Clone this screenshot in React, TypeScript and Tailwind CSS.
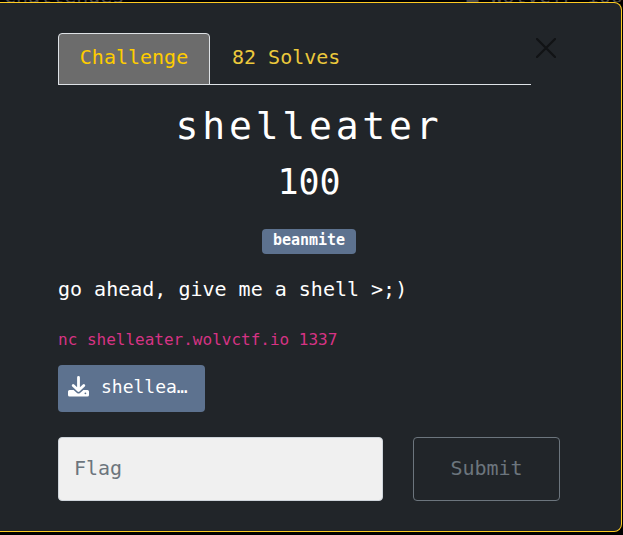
import React from "react";

function CloseIcon() {
  return (
    <svg viewBox="0 0 20 20" className="size-5" fill="none" stroke="#111315" strokeWidth="2.2" strokeLinecap="round" aria-hidden="true">
      <path d="M1 1 L19 19 M19 1 L1 19" />
    </svg>
  );
}

function DownloadIcon() {
  return (
    <svg viewBox="0 0 21 21" className="size-[21px] shrink-0" aria-hidden="true">
      <path
        d="M1.6 14 H5.6 L9 17 Q10.5 18.2 12 17 L15.4 14 H19.4 Q21 14 21 15.6 V19 Q21 20.6 19.4 20.6 H1.6 Q0 20.6 0 19 V15.6 Q0 14 1.6 14 Z"
        fill="currentColor"
      />
      <path
        d="M10.5 1.4 V14 M5.2 9.4 L10.5 14.6 L15.8 9.4"
        fill="none"
        stroke="currentColor"
        strokeWidth="2.8"
        strokeLinecap="round"
        strokeLinejoin="round"
      />
      <circle cx="17.4" cy="17.3" r="0.9" fill="#5d728f" />
    </svg>
  );
}

export default function App() {
  return (
    <div className="min-h-screen bg-black font-['DejaVu_Sans_Mono',monospace] text-white">
      <div className="flex h-[2px] items-end justify-between overflow-hidden pl-1 text-xl leading-3 text-[#4a4a4a]" aria-hidden="true">
        <span>Challenges</span>
        <span>■ WolvCTF 100</span>
      </div>
      <main className="mr-px rounded-r-lg border-y border-r border-[#fc2] bg-[#212529] pt-[30px] pr-[61px] pb-[30px] pl-[58px]">
        <div className="flex items-start">
          <div className="flex flex-1 border-b border-[#dee2e6]" role="tablist">
            <button
              type="button"
              role="tab"
              aria-selected="true"
              className="-mb-px h-[52px] w-[152px] rounded-t border border-[#dee2e6] bg-[#6c6c6c] pb-1 text-center text-xl text-[#fc0]"
            >
              Challenge
            </button>
            <button type="button" role="tab" aria-selected="false" className="h-[51px] px-[22px] pb-1 text-xl text-[#ecc93c]">
              82 Solves
            </button>
          </div>
          <button type="button" aria-label="Close" className="mt-[5px] mr-1 ml-[5px]">
            <CloseIcon />
          </button>
        </div>

        <div className="flex flex-col items-center">
          <h2 className="mt-4 text-[38px] leading-[50px] tracking-widest">shelleater</h2>
          <h3 className="mt-2 text-[35px] leading-[46px]">100</h3>
          <span className="mt-6 rounded bg-[#5d728f] px-[11px] pb-0.5 text-[15px] leading-[23px] font-bold">beanmite</span>
        </div>

        <p className="mt-5 text-xl leading-[30px]">go ahead, give me a shell &gt;;)</p>
        <p className="mt-6 text-base leading-6">
          <code className="font-['DejaVu_Sans_Mono',monospace] text-[#d63384]">nc shelleater.wolvctf.io 1337</code>
        </p>
        <a href="#shelleater" className="mt-[13px] flex h-[47px] w-[147px] items-center gap-3 rounded bg-[#5d728f] px-2.5 pb-1 text-lg">
          <DownloadIcon />
          <span>shellea…</span>
        </a>

        <form className="mt-[25px] flex gap-[30px]">
          <input
            type="text"
            aria-label="Flag"
            placeholder="Flag"
            className="h-16 min-w-0 flex-1 rounded border border-[#ced4da] bg-[#f0f0f0] px-[15px] pb-0.5 text-xl text-[#212529] placeholder:text-[#6c757d]"
          />
          <button type="button" className="h-16 w-[147px] rounded border border-[#6c757d] pb-0.5 text-xl text-[#6c757d]">
            Submit
          </button>
        </form>
      </main>
    </div>
  );
}
